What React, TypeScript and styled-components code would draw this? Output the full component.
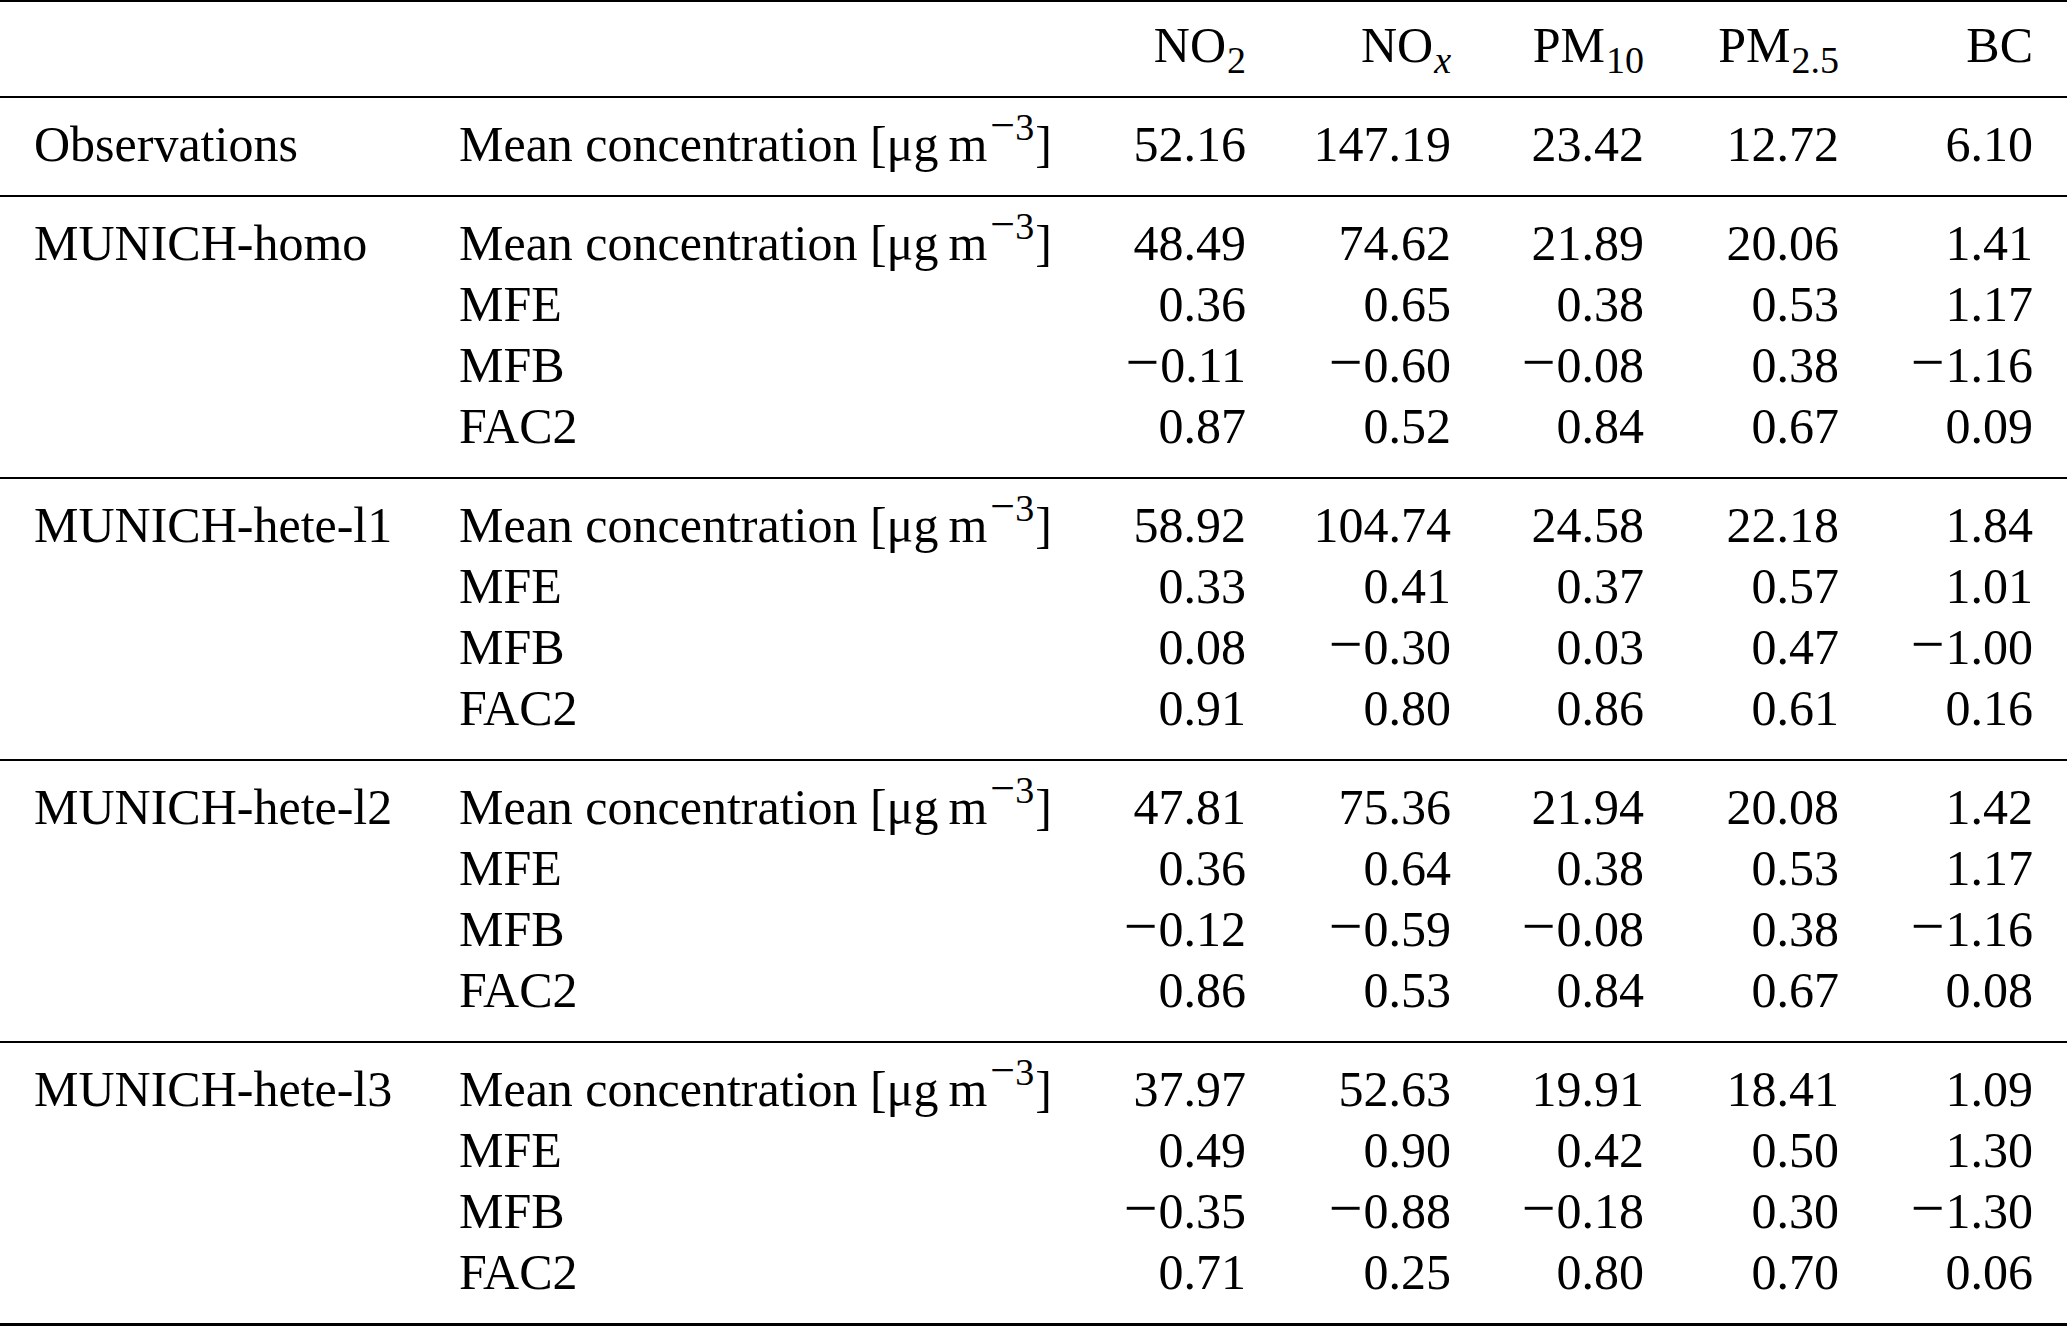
import styled, { createGlobalStyle } from 'styled-components';

const GlobalStyle = createGlobalStyle`
  html, body {
    margin: 0;
    padding: 0;
    background: #ffffff;
  }
  body {
    font-family: "Liberation Serif", "Times New Roman", serif;
    color: #000000;
  }
`;

const COLUMNS = '425px 600px 187px 205px 193px 195px 194px';

const StyledTable = styled.div`
  width: 2067px;
  box-sizing: border-box;
  padding: 0 34px;
  border-top: 2px solid #000;
  border-bottom: 3px solid #000;
  font-size: 50px;
`;

const StyledHead = styled.div`
  margin: 0 -34px;
  padding: 13px 34px 20px;
  border-bottom: 2px solid #000;
`;

const StyledGroup = styled.div<{ $last?: boolean }>`
  margin: 0 -34px;
  padding: 16px 34px 20px;
  border-bottom: ${(p) => (p.$last ? 'none' : '2px solid #000')};
`;

const StyledRow = styled.div`
  display: grid;
  grid-template-columns: ${COLUMNS};
  height: 61px;
  line-height: 61px;
  white-space: nowrap;
`;

const StyledCell = styled.div<{ $num?: boolean }>`
  text-align: ${(p) => (p.$num ? 'right' : 'left')};
`;

const Sub = styled.span`
  font-size: 38px;
  line-height: 0;
  vertical-align: -11px;
  margin-left: 1px;
`;

const Sup = styled.span`
  font-size: 38px;
  line-height: 0;
  vertical-align: 21px;
  margin-left: 3px;
  margin-right: 1px;
`;

const Neg = styled.span<{ $small?: boolean }>`
  font-size: ${(p) => (p.$small ? '44px' : '60px')};
  line-height: 0;
  margin-right: ${(p) => (p.$small ? '0' : '1px')};
`;

const Var = styled.i`
  font-style: italic;
`;

const heads = [
  <>NO<Sub>2</Sub></>,
  <>NO<Sub><Var>x</Var></Sub></>,
  <>PM<Sub>10</Sub></>,
  <>PM<Sub>2.5</Sub></>,
  <>BC</>,
];

const MEAN = 'Mean';

const groups: { name: string; rows: [string, string[]][] }[] = [
  {
    name: 'Observations',
    rows: [[MEAN, ['52.16', '147.19', '23.42', '12.72', '6.10']]],
  },
  {
    name: 'MUNICH-homo',
    rows: [
      [MEAN, ['48.49', '74.62', '21.89', '20.06', '1.41']],
      ['MFE', ['0.36', '0.65', '0.38', '0.53', '1.17']],
      ['MFB', ['-0.11', '-0.60', '-0.08', '0.38', '-1.16']],
      ['FAC2', ['0.87', '0.52', '0.84', '0.67', '0.09']],
    ],
  },
  {
    name: 'MUNICH-hete-l1',
    rows: [
      [MEAN, ['58.92', '104.74', '24.58', '22.18', '1.84']],
      ['MFE', ['0.33', '0.41', '0.37', '0.57', '1.01']],
      ['MFB', ['0.08', '-0.30', '0.03', '0.47', '-1.00']],
      ['FAC2', ['0.91', '0.80', '0.86', '0.61', '0.16']],
    ],
  },
  {
    name: 'MUNICH-hete-l2',
    rows: [
      [MEAN, ['47.81', '75.36', '21.94', '20.08', '1.42']],
      ['MFE', ['0.36', '0.64', '0.38', '0.53', '1.17']],
      ['MFB', ['-0.12', '-0.59', '-0.08', '0.38', '-1.16']],
      ['FAC2', ['0.86', '0.53', '0.84', '0.67', '0.08']],
    ],
  },
  {
    name: 'MUNICH-hete-l3',
    rows: [
      [MEAN, ['37.97', '52.63', '19.91', '18.41', '1.09']],
      ['MFE', ['0.49', '0.90', '0.42', '0.50', '1.30']],
      ['MFB', ['-0.35', '-0.88', '-0.18', '0.30', '-1.30']],
      ['FAC2', ['0.71', '0.25', '0.80', '0.70', '0.06']],
    ],
  },
];

function Value({ v }: { v: string }) {
  if (!v.startsWith('-')) return <>{v}</>;
  return (
    <>
      <Neg>−</Neg>
      {v.slice(1)}
    </>
  );
}

function Metric({ label }: { label: string }) {
  if (label !== MEAN) return <>{label}</>;
  return (
    <>
      Mean concentration [μg{'\u2009'}m
      <Sup>
        <Neg $small>−</Neg>3
      </Sup>
      ]
    </>
  );
}

export default function App() {
  return (
    <>
      <GlobalStyle />
      <StyledTable>
        <StyledHead>
          <StyledRow>
            <StyledCell />
            <StyledCell />
            {heads.map((h, i) => (
              <StyledCell $num key={i}>
                {h}
              </StyledCell>
            ))}
          </StyledRow>
        </StyledHead>
        {groups.map((g, gi) => (
          <StyledGroup key={g.name} $last={gi === groups.length - 1}>
            {g.rows.map(([label, values], ri) => (
              <StyledRow key={label}>
                <StyledCell>{ri === 0 ? g.name : ''}</StyledCell>
                <StyledCell>
                  <Metric label={label} />
                </StyledCell>
                {values.map((v, vi) => (
                  <StyledCell $num key={vi}>
                    <Value v={v} />
                  </StyledCell>
                ))}
              </StyledRow>
            ))}
          </StyledGroup>
        ))}
      </StyledTable>
    </>
  );
}
